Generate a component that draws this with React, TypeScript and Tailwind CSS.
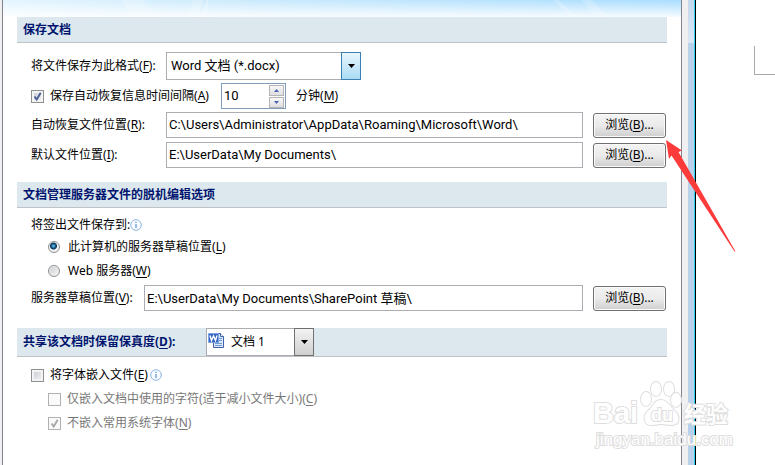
import { useState } from 'react';
import type { ReactNode } from 'react';
import clsx from 'clsx';

function Key({ children }: { children: string }) {
  return (
    <>
      (<span className="underline underline-offset-2">{children}</span>)
    </>
  );
}

function SectionHeader({ children, className }: { children: ReactNode; className?: string }) {
  return (
    <div
      className={clsx(
        'flex items-center border-b border-[#c0c3c6] bg-[#dde7ee] pl-1.5 font-bold text-[#00156e]',
        className
      )}
    >
      {children}
    </div>
  );
}

function InfoIcon() {
  return (
    <svg viewBox="0 0 12 12" className="size-3 shrink-0" fill="none">
      <circle cx="6" cy="6" r="5.300" stroke="#8fb3e0" fill="#f7fbff" />
      <path d="M6 5v4M6 2.800v1.200" stroke="#4f86cc" strokeWidth="1.100" />
    </svg>
  );
}

interface CheckProps {
  id: string;
  checked: boolean;
  disabled?: boolean;
  onChange?: (value: boolean) => void;
}

function CheckBox({ id, checked, disabled, onChange }: CheckProps) {
  return (
    <span className="relative flex size-[13px] shrink-0">
      <input
        id={id}
        type="checkbox"
        checked={checked}
        disabled={disabled}
        onChange={(e) => onChange?.(e.target.checked)}
        className={clsx(
          'size-[13px] appearance-none border',
          disabled
            ? 'border-[#b1b1b1] bg-[#fafafa]'
            : 'border-[#8e8f8f] bg-linear-to-br from-[#c4c9d0] to-[#f6f6f6] shadow-[inset_0_0_0_2px_#f4f4f4]'
        )}
      />
      {checked && (
        <svg viewBox="0 0 13 13" className="pointer-events-none absolute inset-0" fill="none">
          <path d="M3.500 6.500 5.700 9.500 9.700 2.800" stroke={disabled ? '#a8a8a8' : '#4a5f97'} strokeWidth="1.900" />
        </svg>
      )}
    </span>
  );
}

interface RadioProps {
  id: string;
  checked: boolean;
  onChange: () => void;
}

function Radio({ id, checked, onChange }: RadioProps) {
  return (
    <input
      id={id}
      type="radio"
      name="checkout"
      checked={checked}
      onChange={onChange}
      className={clsx(
        'size-3 shrink-0 appearance-none rounded-full border border-[#8e8f8f]',
        checked
          ? 'bg-[radial-gradient(circle_at_45%_40%,#6fd0f5_0px,#1b5f8f_2px,#0e3150_3px,#eef2f5_4px)]'
          : 'bg-linear-to-br from-[#c9cbce] to-[#fafafa] shadow-[inset_0_0_0_1px_#f0f0f0]'
      )}
    />
  );
}

function PathInput({ id, value }: { id: string; value: string }) {
  return (
    <input
      id={id}
      type="text"
      defaultValue={value}
      className="h-[26px] min-w-0 flex-1 border border-[#abadb3] bg-white px-0.5 pb-0.5 font-['Roboto','Noto_Sans_CJK_SC',sans-serif] text-[13px] outline-none"
    />
  );
}

function BrowseButton() {
  return (
    <button
      type="button"
      className="h-[25px] w-[73px] shrink-0 rounded-[3px] border border-[#707070] bg-linear-to-b from-[#f3f3f3] from-0% via-[#ebebeb] via-50% to-[#cfcfcf] shadow-[inset_0_0_0_1px_#fbfbfb]"
    >
      浏览
      <Key>B</Key>...
    </button>
  );
}

function DownArrow({ className }: { className: string }) {
  return (
    <span className={clsx('pointer-events-none absolute inset-y-0 right-0 flex w-5 items-center justify-center border', className)}>
      <svg viewBox="0 0 7 4" className="h-1 w-[7px]">
        <path d="M0 0h7L3.500 4z" fill="#000" />
      </svg>
    </span>
  );
}

function WordIcon() {
  return (
    <svg viewBox="0 0 16 16" className="pointer-events-none absolute top-1 left-0.5 size-4">
      <path d="M5.500 1.500h7l3 3v11h-10z" fill="#dce9fa" stroke="#3c62b0" />
      <path d="M12.500 1.500v3h3" fill="#fff" stroke="#3c62b0" />
      <path d="M10 6.500h4M10 8.500h4M7 11.500h7M7 13.500h7" stroke="#7097d6" />
      <path d="M.5 1.500h10v9H.5z" fill="#3465c0" stroke="#7da3e4" />
      <path d="m2 3.500 1.500 5 2-4.500 2 4.500 1.500-5" fill="none" stroke="#fff" strokeWidth="1.400" />
    </svg>
  );
}

function SpinButton({ up, onClick }: { up?: boolean; onClick: () => void }) {
  return (
    <button
      type="button"
      aria-label={up ? '增加' : '减少'}
      onClick={onClick}
      className="flex h-[11px] w-[15px] items-center justify-center border border-[#b5b5b8] bg-linear-to-b from-[#f8f8f8] to-[#dedee2]"
    >
      <svg viewBox="0 0 5 3" className="h-[3px] w-[5px]">
        <path d={up ? 'M0 3h5L2.500 0z' : 'M0 0h5L2.500 3z'} fill="#4861ae" />
      </svg>
    </button>
  );
}

function Banner() {
  return (
    <div className="relative h-[17px] overflow-hidden bg-linear-to-r from-[#e4f5ff] via-[#cbeafc] via-35% to-[#a9ddff]">
      <svg viewBox="0 0 678 17" preserveAspectRatio="none" className="absolute inset-0 size-full">
        <path d="M118 0h22l14 17h-24zM190 0h10l-6 17h-8zM550 0h5l20 17h-8zM579 0h10l16 17h-12z" fill="#fff" opacity=".2" />
        <path d="M205 0q-1 9-5 17" stroke="#fff" fill="none" opacity=".5" />
      </svg>
      <div className="absolute inset-0 bg-linear-to-b from-transparent to-white/90" />
    </div>
  );
}

function PointerArrow() {
  return (
    <svg viewBox="0 0 70 112" className="pointer-events-none absolute top-[140px] right-[39px] h-28 w-[70px]">
      <path d="M0 0 16 10.500 12.500 12 69.500 111.500 68.500 111.500 5.500 15.500 3 19z" fill="#fd3b3b" />
    </svg>
  );
}

function Watermark() {
  return (
    <svg
      viewBox="0 0 144 72"
      className="pointer-events-none absolute top-[378px] right-[40px] h-[72px] w-36 overflow-visible"
      fill="#fff"
      stroke="#dedede"
      paintOrder="stroke"
    >
      <g strokeWidth="2" fontFamily="Liberation Sans, Noto Sans CJK SC, sans-serif" fontWeight="bold">
        <text x="2" y="45" fontSize="29">Bai</text>
        <ellipse cx="55" cy="21" rx="5" ry="7" />
        <ellipse cx="65" cy="11" rx="5" ry="7" />
        <ellipse cx="78" cy="11" rx="5" ry="7" />
        <ellipse cx="85" cy="22" rx="5" ry="7" />
        <path d="M70 22c-7 0-8 7-13 11-5 4-5 14 3 14 5 0 7-1 10-1s6 1 11 1c8 0 8-9 3-14-5-4-7-11-14-11z" />
        <text x="60" y="43" fontSize="18">du</text>
        <text x="93" y="44" fontSize="22">经验</text>
      </g>
      <text x="5" y="67" fontSize="17" strokeWidth="2" fontFamily="Liberation Sans, sans-serif">jingyan.baidu.com</text>
    </svg>
  );
}

export default function App() {
  const [autoSave, setAutoSave] = useState(true);
  const [minutes, setMinutes] = useState(10);
  const [target, setTarget] = useState('local');
  const [embed, setEmbed] = useState(false);

  return (
    <div className="relative flex min-h-screen overflow-hidden bg-white font-['Noto_Sans','Noto_Sans_CJK_SC',sans-serif] text-xs text-black">
      <div className="w-[3px] shrink-0 border-r border-[#83838f] bg-[#f0f0f0]" />

      <main className="min-w-0 flex-1">
        <Banner />
        <div className="pr-3.5 pl-3.5">
          <SectionHeader className="h-[26px]">保存文档</SectionHeader>
          <div className="flex flex-col gap-[3px] pt-[9px] pr-px pl-3.5">
            <div className="flex items-center">
              <label htmlFor="format" className="w-[135px] shrink-0">
                将文件保存为此格式<Key>F</Key>:
              </label>
              <div className="relative h-7 w-[195px]">
                <select
                  id="format"
                  className="size-full appearance-none border border-[#abadb3] bg-white pr-5 pl-1 font-['Roboto','Noto_Sans_CJK_SC',sans-serif] text-[13px] outline-none"
                >
                  <option>Word 文档 (*.docx)</option>
                </select>
                <DownArrow className="border-[#3c7fb1] bg-linear-to-b from-[#e8f6fd] to-[#a9dbf5]" />
              </div>
            </div>

            <div className="flex items-center">
              <CheckBox id="autosave" checked={autoSave} onChange={setAutoSave} />
              <label htmlFor="autosave" className="w-[177px] shrink-0 pl-1.5">
                保存自动恢复信息时间间隔<Key>A</Key>
              </label>
              <div className="flex h-[26px] w-[65px] items-center border border-[#7f9db9] pr-px">
                <input
                  id="minutes"
                  type="text"
                  value={minutes}
                  onChange={(e) => setMinutes(Number(e.target.value) || 0)}
                  className="min-w-0 flex-1 pl-0.5 font-['Roboto',sans-serif] text-[13px] outline-none"
                />
                <div className="flex flex-col gap-px">
                  <SpinButton up onClick={() => setMinutes(minutes + 1)} />
                  <SpinButton onClick={() => setMinutes(Math.max(1, minutes - 1))} />
                </div>
              </div>
              <label htmlFor="minutes" className="pl-2.5">
                分钟<Key>M</Key>
              </label>
            </div>

            <div className="flex flex-col gap-1">
              <div className="flex items-center">
                <label htmlFor="recover" className="w-[135px] shrink-0">
                  自动恢复文件位置<Key>R</Key>:
                </label>
                <PathInput id="recover" value={'C:\\Users\\Administrator\\AppData\\Roaming\\Microsoft\\Word\\'} />
                <div className="flex pl-2.5">
                  <BrowseButton />
                </div>
              </div>
              <div className="flex items-center">
                <label htmlFor="default" className="w-[135px] shrink-0">
                  默认文件位置<Key>I</Key>:
                </label>
                <PathInput id="default" value={'E:\\UserData\\My Documents\\'} />
                <div className="flex pl-2.5">
                  <BrowseButton />
                </div>
              </div>
            </div>
          </div>

          <SectionHeader className="mt-3.5 h-[26px]">文档管理服务器文件的脱机编辑选项</SectionHeader>
          <div className="flex flex-col pt-[7px] pr-px pl-3.5">
            <div className="flex h-5 items-center">
              将签出文件保存到:
              <InfoIcon />
            </div>
            <div className="flex h-6 items-center gap-2 pl-[17px]">
              <Radio id="local" checked={target === 'local'} onChange={() => setTarget('local')} />
              <label htmlFor="local">
                此计算机的服务器草稿位置<Key>L</Key>
              </label>
            </div>
            <div className="flex h-6 items-center gap-2 pl-[17px]">
              <Radio id="web" checked={target === 'web'} onChange={() => setTarget('web')} />
              <label htmlFor="web">
                Web 服务器<Key>W</Key>
              </label>
            </div>
            <div className="flex items-center pt-0.5">
              <label htmlFor="drafts" className="w-[113px] shrink-0">
                服务器草稿位置<Key>V</Key>:
              </label>
              <PathInput id="drafts" value={'E:\\UserData\\My Documents\\SharePoint 草稿\\'} />
              <div className="flex pl-2.5">
                <BrowseButton />
              </div>
            </div>
          </div>

          <SectionHeader className="mt-[17px] h-[29px]">
            <label htmlFor="share" className="w-[183px] shrink-0">
              共享该文档时保留保真度<Key>D</Key>:
            </label>
            <div className="relative h-7 w-[108px] font-normal text-black">
              <select id="share" className="size-full appearance-none border border-[#abadb3] bg-white pr-5 pl-6 outline-none">
                <option>文档 1</option>
              </select>
              <WordIcon />
              <DownArrow className="border-[#707070] bg-linear-to-b from-[#f3f3f3] to-[#cfcfcf]" />
            </div>
          </SectionHeader>
          <div className="flex flex-col pt-1.5 pl-3.5">
            <div className="flex h-6 items-center">
              <CheckBox id="embed" checked={embed} onChange={setEmbed} />
              <label htmlFor="embed" className="pr-0.5 pl-1.5">
                将字体嵌入文件<Key>E</Key>
              </label>
              <InfoIcon />
            </div>
            <div className="flex h-6 items-center pl-[17px] text-[#787878]">
              <CheckBox id="used" checked={false} disabled />
              <label htmlFor="used" className="pl-1.5">
                仅嵌入文档中使用的字符(适于减小文件大小)<Key>C</Key>
              </label>
            </div>
            <div className="flex h-6 items-center pl-[17px] text-[#787878]">
              <CheckBox id="common" checked disabled />
              <label htmlFor="common" className="pl-1.5">
                不嵌入常用系统字体<Key>N</Key>
              </label>
            </div>
          </div>
        </div>
      </main>

      <div className="flex w-[15px] shrink-0 border-l border-[#83838f]">
        <div className="w-1.5 bg-[#f0f0f0]" />
        <div className="w-1.5 bg-[#b9d1ea]">
          <div className="h-[43px] bg-linear-to-b from-[#c5d8ee] to-[#dbe7f5]" />
        </div>
        <div className="w-px bg-[#2fd0f2]" />
        <div className="w-px bg-black" />
      </div>
      <aside className="flex w-[79px] shrink-0 justify-end pt-[46px]">
        <div className="h-[29px] w-[21px] border-b border-l border-[#a9a9a9]" />
      </aside>

      <PointerArrow />
      <Watermark />
    </div>
  );
}
